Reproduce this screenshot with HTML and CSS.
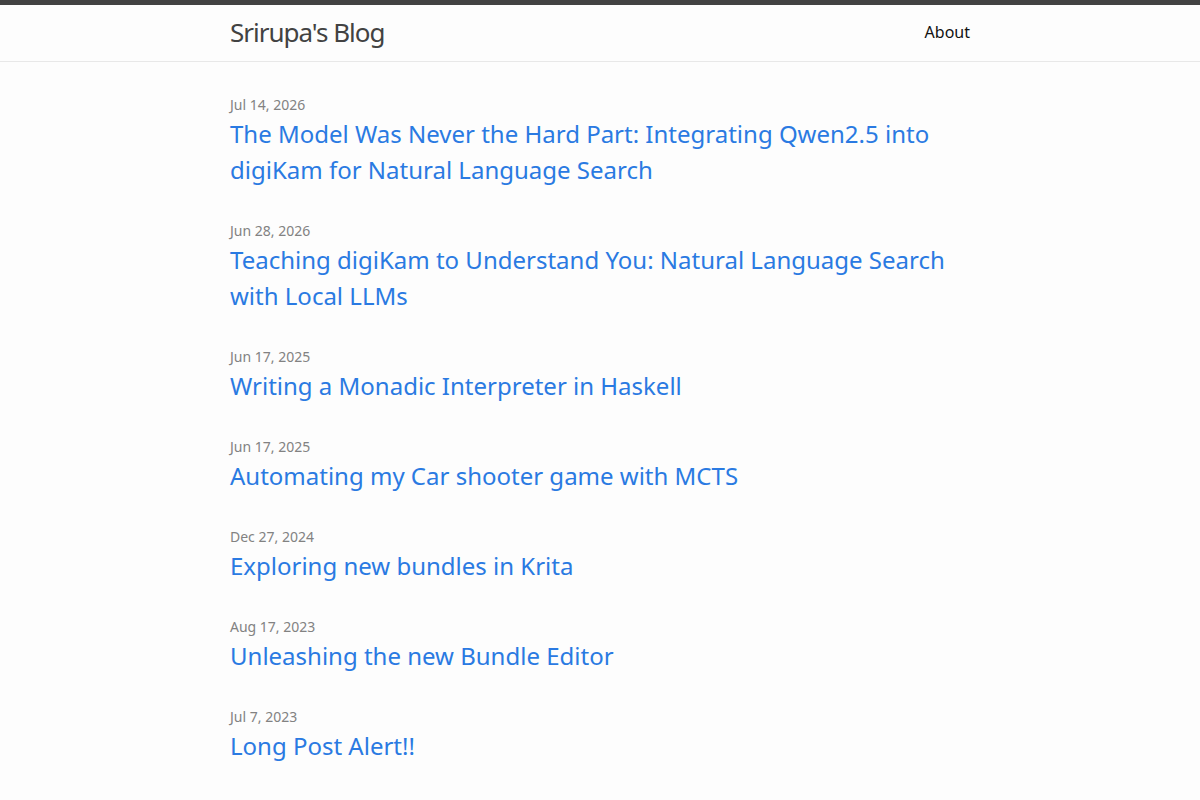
FILE: index.html
```html
<!DOCTYPE html>
<html lang="en">
<head>
<meta charset="utf-8">
<title>Srirupa's Blog</title>
<link rel="stylesheet" href="styles.css">
</head>
<body>
<header class="site-header">
  <div class="wrapper header-inner">
    <a class="site-title" href="#">Srirupa's Blog</a>
    <nav class="site-nav">
      <a class="page-link" href="#">About</a>
    </nav>
  </div>
</header>
<main class="page-content">
  <div class="wrapper">
    <ul class="post-list">
      <li>
        <span class="post-meta">Jul 14, 2026</span>
        <h3><a class="post-link" href="#">The Model Was Never the Hard Part: Integrating Qwen2.5 into digiKam for Natural Language Search</a></h3>
      </li>
      <li>
        <span class="post-meta">Jun 28, 2026</span>
        <h3><a class="post-link" href="#">Teaching digiKam to Understand You: Natural Language Search with Local LLMs</a></h3>
      </li>
      <li>
        <span class="post-meta">Jun 17, 2025</span>
        <h3><a class="post-link" href="#">Writing a Monadic Interpreter in Haskell</a></h3>
      </li>
      <li>
        <span class="post-meta">Jun 17, 2025</span>
        <h3><a class="post-link" href="#">Automating my Car shooter game with MCTS</a></h3>
      </li>
      <li>
        <span class="post-meta">Dec 27, 2024</span>
        <h3><a class="post-link" href="#">Exploring new bundles in Krita</a></h3>
      </li>
      <li>
        <span class="post-meta">Aug 17, 2023</span>
        <h3><a class="post-link" href="#">Unleashing the new Bundle Editor</a></h3>
      </li>
      <li>
        <span class="post-meta">Jul 7, 2023</span>
        <h3><a class="post-link" href="#">Long Post Alert!!</a></h3>
      </li>
    </ul>
  </div>
</main>
</body>
</html>
```
FILE: styles.css
```css
html, body {
  margin: 0;
  padding: 0;
}
body {
  font-family: "Noto Sans", "DejaVu Sans", sans-serif;
  font-size: 16px;
  line-height: 1.5;
  font-weight: 400;
  color: #111111;
  background-color: #fdfdfd;
}
a {
  text-decoration: none;
}
.wrapper {
  max-width: 740px;
  margin: 0 auto;
  padding: 0 30px;
}
.site-header {
  border-top: 5px solid #424242;
  border-bottom: 1px solid #e8e8e8;
  min-height: 56px;
}
.header-inner {
  display: flex;
  justify-content: space-between;
  align-items: flex-start;
}
.site-title {
  font-size: 26px;
  font-weight: 400;
  line-height: 54px;
  letter-spacing: -1px;
  color: #424242;
}
.site-nav {
  line-height: 54px;
}
.page-link {
  color: #111111;
  line-height: 1.5;
}
.page-content {
  padding: 30px 0;
}
.post-list {
  list-style: none;
  margin: 0;
  padding: 0;
}
.post-list li {
  margin-bottom: 30px;
}
.post-meta {
  font-size: 14px;
  color: #828282;
}
.post-list h3 {
  margin: 0 0 15px;
  font-size: 24px;
  font-weight: 400;
}
.post-link {
  display: block;
  color: #2a7ae2;
}
```
